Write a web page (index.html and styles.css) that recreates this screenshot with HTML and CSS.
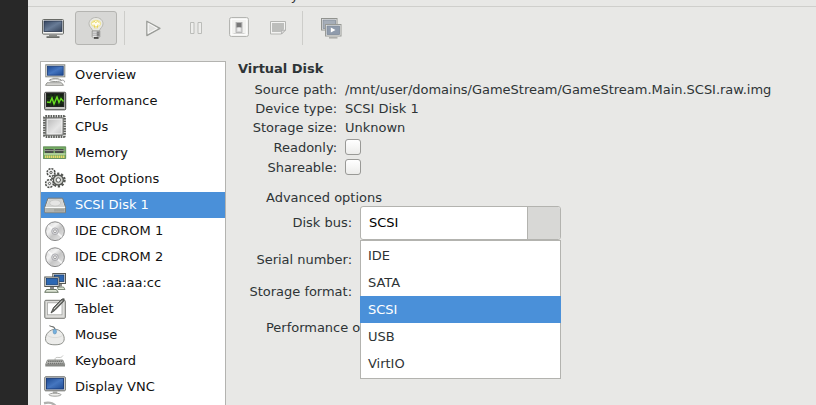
FILE: index.html
```html
<!DOCTYPE html>
<html lang="en">
<head>
  <meta charset="UTF-8">
  <title>Virtual Machine - SCSI Disk 1</title>
  <link rel="stylesheet" href="styles.css">
</head>
<body>
  <svg class="defs" width="0" height="0">
    <defs>
      <linearGradient id="screen" x1="0" y1="0" x2="1" y2="1">
        <stop offset="0" stop-color="#1d4890"/><stop offset=".5" stop-color="#4576c0"/><stop offset="1" stop-color="#1f4b93"/>
      </linearGradient>
      <linearGradient id="slate" x1="0" y1="0" x2="1" y2="1">
        <stop offset="0" stop-color="#354560"/><stop offset=".5" stop-color="#687b96"/><stop offset="1" stop-color="#344258"/>
      </linearGradient>
      <linearGradient id="metal" x1="0" y1="0" x2="1" y2="1">
        <stop offset="0" stop-color="#b4b4b4"/><stop offset=".6" stop-color="#e6e6e6"/><stop offset="1" stop-color="#c4c4c4"/>
      </linearGradient>
      <linearGradient id="disc" x1="0" y1="0" x2="1" y2="1">
        <stop offset="0" stop-color="#d0d0d0"/><stop offset=".35" stop-color="#f3f3f3"/><stop offset=".55" stop-color="#c6c6c6"/><stop offset="1" stop-color="#ececec"/>
      </linearGradient>
      <symbol id="cd" viewBox="0 0 24 24">
        <circle cx="12" cy="13.2" r="9.4" fill="url(#disc)" stroke="#8b8b8b"/>
        <path d="M12 13 5 7.500M12 13l7 6" stroke="#fff" stroke-width="2" opacity=".7"/>
        <circle cx="12" cy="13.2" r="3.3" fill="#d8d8dc" stroke="#a2a2a6" stroke-width=".8"/>
        <circle cx="12" cy="13.2" r="1.4" fill="#fff" stroke="#808080" stroke-width=".7"/>
      </symbol>
    </defs>
  </svg>

  <div class="window">
    <div class="menubar"><span>Send Key</span></div>

    <div class="toolbar">
      <button class="tool">
        <svg width="24" height="24" viewBox="0 0 24 24">
          <rect x="1.500" y="3.500" width="21" height="14.600" rx="1" fill="#f4f4f2" stroke="#676965"/>
          <rect x="3" y="5" width="18" height="10.500" fill="url(#slate)" stroke="#28354b" stroke-width=".8"/>
          <path d="M8 18.600h8v1.600H8z" fill="#8b8d89"/><path d="M5.500 20.300h13v1.600h-13z" fill="#5c5e5a"/>
        </svg>
      </button>
      <button class="tool active">
        <svg width="24" height="24" viewBox="0 0 24 24">
          <path d="M12 1.500c-4 0-7 2.800-7 6.300 0 3.400 3 4 3.600 7.200h6.800C16 11.800 19 11.200 19 7.800c0-3.500-3-6.300-7-6.300z" fill="#e9e9e4" stroke="#b2b2ad" stroke-width=".9"/>
          <ellipse cx="12" cy="7.500" rx="4.600" ry="3.200" fill="#fffdf0" stroke="#eee49a" stroke-width="1.200"/>
          <path d="M8.500 7l1.500-1.800 1.800 1.500 1.800-1.500L15.500 7M10 8.500l1 4M14 8.500l-1 4" fill="none" stroke="#e6cf40" stroke-width=".8"/>
          <path d="M8.200 15h7.600v5.600l-1.600 1.700H9.800l-1.600-1.700z" fill="#e4e4e4" stroke="#8b8b88" stroke-width=".8"/>
          <path d="M12.700 15.500h2.700v5h-2.700z" fill="#777"/><path d="M8.500 17.200h7M8.500 19.200h7" stroke="#999" stroke-width=".8"/>
          <path d="M10 21h4.500v1.800H10z" fill="#4b4b48"/>
        </svg>
      </button>
      <i class="sep"></i>
      <button class="tool">
        <svg width="24" height="24" viewBox="0 0 24 24">
          <path d="M5.800 5.200v14.400L19 12.400z" fill="#e2e2e0" stroke="#999b97" stroke-width="1.200" stroke-linejoin="round"/>
          <path d="M7.300 7.400v9.800l8.800-4.800z" fill="none" stroke="#f8f8f7"/>
        </svg>
      </button>
      <button class="tool">
        <svg width="24" height="24" viewBox="0 0 24 24">
          <path d="M6.500 6.500h3.500v11H6.500zM14 6.500h3.500v11H14z" fill="#eeeeec" stroke="#bbbcb9"/>
        </svg>
      </button>
      <button class="tool">
        <svg width="24" height="24" viewBox="0 0 24 24">
          <rect x="2.500" y="1.500" width="19" height="19" rx="2" fill="#f2f2f0" stroke="#b4b5b2"/>
          <rect x="4.500" y="3.500" width="15" height="15" fill="none" stroke="#fff" stroke-width=".7"/>
          <path d="M6.500 17.500h11" stroke="#d5d5d3"/>
          <rect x="9" y="6.500" width="6" height="10" fill="#d5d5d5" stroke="#aaa" stroke-width=".8"/>
          <path d="M9.500 7h5v4.500h-5z" fill="#777"/><path d="M10.500 11.500h3v3.500h-3z" fill="#eee"/>
        </svg>
      </button>
      <button class="tool narrow">
        <svg width="24" height="24" viewBox="0 0 24 24">
          <path d="M4.500 5.500h15v8.500l-4 4h-11z" fill="#f3f3f2" stroke="#b4b5b2"/>
          <path d="M6 7h12v6.500L14.500 16H6z" fill="#bdbebc"/>
          <path d="M15.500 18c-.2-1.500 0-3 0-3.700 1.300.3 3 .2 4-.3z" fill="#dededc" stroke="#aaa" stroke-width=".8"/>
        </svg>
      </button>
      <i class="sep"></i>
      <button class="tool">
        <svg width="24" height="24" viewBox="0 0 24 24">
          <rect x="2.500" y="2.500" width="15.500" height="11.500" fill="#f0f0ef" stroke="#91938f"/>
          <rect x="4" y="4" width="12.500" height="8.500" fill="#a5adb8" stroke="#858e9b" stroke-width=".8"/>
          <rect x="6.500" y="8.500" width="15.500" height="11.500" fill="#f0f0ef" stroke="#989a96"/>
          <rect x="8" y="10" width="12.500" height="8.500" fill="#8f9bac" stroke="#7d899a" stroke-width=".8"/>
          <path d="M11.800 11.500v5l4.700-2.500z" fill="#fff"/>
          <path d="M10 21.800h8.500" stroke="#a9aaa7" stroke-width="1.500"/>
        </svg>
      </button>
    </div>

    <div class="content">
      <ul class="hardware">
        <li>
          <svg width="24" height="24" viewBox="0 0 24 24">
            <rect x="2.800" y="2.800" width="19" height="12" fill="#e9e9e6" stroke="#84867f"/>
            <rect x="4.400" y="4.200" width="15.800" height="9" fill="url(#screen)" stroke="#173a78" stroke-width=".8"/>
            <path d="M9.500 15.300h6v2.200h-6z" fill="#c9cac6"/>
            <ellipse cx="12.300" cy="18.200" rx="6" ry="1.300" fill="#fff" stroke="#777973" stroke-width=".8"/>
            <path d="M4 20.800h14.500l2 2.500H2.500z" fill="#e4e4e1" stroke="#777973" stroke-width=".8"/>
            <path d="M18 18.500c2-1 4 0 3.500 1.800" fill="none" stroke="#999"/>
          </svg>
          Overview
        </li>
        <li>
          <svg width="24" height="24" viewBox="0 0 24 24">
            <rect x="1.700" y="4.300" width="21" height="17.500" rx="1" fill="#c7c8c4" stroke="#3b3d39"/>
            <rect x="3.500" y="5.500" width="17.300" height="13" fill="#142112" stroke="#222"/>
            <path d="M4 9h16.500M4 12h16.500M4 15h16.500M8 6v12M12 6v12M16 6v12" stroke="#2a4923" stroke-width=".6"/>
            <path d="M4 14l3 .5 2-4.500 2 6 3-7 2 5.500 2-4 2.500 3" fill="none" stroke="#68df20" stroke-width="1.400"/>
          </svg>
          Performance
        </li>
        <li>
          <svg width="24" height="24" viewBox="0 0 24 24">
            <rect x="1.500" y="2.500" width="20" height="20" rx="1" fill="none" stroke="#5f615d" stroke-width="2.800" stroke-dasharray="1.700 .8"/>
            <rect x="2.800" y="3.800" width="17.400" height="17.400" rx="1" fill="url(#metal)" stroke="#6a6c68"/>
            <rect x="4.500" y="5.500" width="14" height="14" fill="none" stroke="#f0f0f0" stroke-width=".7"/>
          </svg>
          CPUs
        </li>
        <li>
          <svg width="24" height="24" viewBox="0 0 24 24">
            <path d="M.3 6.800h22.400v11.700H.3z" fill="#75ad65" stroke="#55824a" stroke-width=".8"/>
            <path d="M2 9h8.500v4H2zM12 9h8.500v4H12z" fill="#484d49"/>
            <path d="M1 10.500h21" stroke="#93958e" stroke-width="1"/>
            <path d="M1 14h21.500" stroke="#e3edcb" stroke-width="1"/>
            <path d="M2 16.700h19.500" stroke="#e8d76a" stroke-width="2.500" stroke-dasharray="1.400 .6"/>
          </svg>
          Memory
        </li>
        <li>
          <svg width="24" height="24" viewBox="0 0 24 24">
            <circle cx="15.300" cy="14" r="6.200" fill="none" stroke="#555753" stroke-width="2.400" stroke-dasharray="2.200 1.700"/>
            <circle cx="15.300" cy="14" r="5" fill="#d2d3cf" stroke="#555753" stroke-width="1.300"/>
            <circle cx="15.300" cy="14" r="2.200" fill="#fff" stroke="#555753"/>
            <circle cx="8" cy="6.500" r="3.900" fill="#eee" stroke="#4a4c48" stroke-width="1.500" stroke-dasharray="2 1.060"/>
            <circle cx="8" cy="6.500" r="1.100" fill="#fff" stroke="#555753"/>
            <circle cx="6.500" cy="17.500" r="3.900" fill="#eee" stroke="#4a4c48" stroke-width="1.500" stroke-dasharray="2 1.060"/>
            <circle cx="6.500" cy="17.500" r="1.100" fill="#fff" stroke="#555753"/>
          </svg>
          Boot Options
        </li>
        <li class="selected">
          <svg width="24" height="24" viewBox="0 0 24 24">
            <path d="M5 6.200h14.500l3 9v5.500H1.800v-5.500z" fill="#e9e9e8" stroke="#777975" stroke-linejoin="round"/>
            <path d="M5.800 7h13l2.500 8H3z" fill="#d2d3d1"/><ellipse cx="12.200" cy="11" rx="5.500" ry="3" fill="#e5e5e4" stroke="#c2c3c0" stroke-width=".7"/>
            <path d="M2.300 15.800h19.800v4.400H2.300z" fill="#b3b5b0"/><path d="M12 17v2.500M14 17v2.500M16 17v2.500M18 17v2.500M20 17v2.500" stroke="#888a85" stroke-width=".8"/>
            <path d="M2.300 15.500h19.800" stroke="#fff" stroke-width=".8"/>
          </svg>
          SCSI Disk 1
        </li>
        <li><svg width="24" height="24"><use href="#cd"/></svg>IDE CDROM 1</li>
        <li><svg width="24" height="24"><use href="#cd"/></svg>IDE CDROM 2</li>
        <li>
          <svg width="24" height="24" viewBox="0 0 24 24">
            <rect x="9.800" y="3.500" width="12.700" height="10" fill="#e7e7e4" stroke="#555753"/>
            <rect x="11.400" y="5" width="9.500" height="6.500" fill="#2c68b4" stroke="#143c72" stroke-width=".8"/>
            <path d="M16 14h3v2.500h-3z" fill="#888"/><path d="M14.500 17h6l1.500 2.500h-7z" fill="#dde5d5" stroke="#62705d" stroke-width=".8"/>
            <rect x="1.800" y="7" width="14.200" height="9.500" fill="#eeeeeb" stroke="#555753"/>
            <rect x="3.400" y="8.500" width="11" height="6.300" fill="#2c68b4" stroke="#143c72" stroke-width=".8"/>
            <path d="M7 17h4v2H7z" fill="#888"/><path d="M3.500 19.500h9.800l2 2.800H1.700z" fill="#dde5d5" stroke="#596853" stroke-width=".9"/>
          </svg>
          NIC :aa:aa:cc
        </li>
        <li>
          <svg width="24" height="24" viewBox="0 0 24 24">
            <rect x="1.800" y="4.300" width="20.500" height="18" rx="1" fill="#ddddda" stroke="#737571"/>
            <rect x="4.500" y="6.800" width="14.500" height="12" fill="#fff" stroke="#a4a5a2" stroke-width=".8"/>
            <path d="M8 17l2.500-5.500L19 3l2.200-.2-.6 2.700-8.800 9z" fill="#6c6e6a" stroke="#444642" stroke-width=".8"/>
            <path d="M11 13l8-8.300" stroke="#d5d6d3"/>
          </svg>
          Tablet
        </li>
        <li>
          <svg width="24" height="24" viewBox="0 0 24 24">
            <path d="M6.500 3.500c1 2 5-.5 5.500 4" fill="none" stroke="#6d6f6b" stroke-width="1.200"/>
            <path d="M12 7.300c-5 0-9.500 4.500-9.500 9.300 0 4.500 3.500 6.200 9.500 6.200s9.200-1.700 9.200-6.200C21.200 11.800 17 7.300 12 7.300z" fill="#ececea" stroke="#8c8e89"/>
            <path d="M4.500 13.500c4 2.800 11 2.800 15 0" fill="none" stroke="#d5d6d3" stroke-width=".8"/>
            <ellipse cx="11.800" cy="9.500" rx="1.700" ry="2.500" fill="#75b1df" stroke="#5a8db5" stroke-width=".6"/>
          </svg>
          Mouse
        </li>
        <li>
          <svg width="24" height="24" viewBox="0 0 24 24">
            <path d="M12 12c0-2.500 1-2.800 4-2.500 2 .2 3-.5 4-2" fill="none" stroke="#c5c6c3"/>
            <path d="M4.500 12h15.200l2 4.500H2.600z" fill="#c6c7c4" stroke="#777975" stroke-width=".8"/>
            <path d="M5 13.300h14.500M4.500 15.300h16" stroke="#585a56" stroke-width="1.100" stroke-dasharray="1.600 .5"/>
            <path d="M2.300 16.700h19.700v1.800H2.300z" fill="#858783"/>
          </svg>
          Keyboard
        </li>
        <li>
          <svg width="24" height="24" viewBox="0 0 24 24">
            <rect x="1.800" y="2.800" width="20.500" height="14" rx=".8" fill="#e0e0dd" stroke="#676965"/>
            <rect x="3.500" y="4.300" width="17" height="10.700" fill="url(#screen)" stroke="#153775" stroke-width=".9"/>
            <path d="M9.800 17.300h4.500v2.200H9.800z" fill="#aaaba8"/>
            <ellipse cx="12" cy="20.700" rx="6" ry="1.500" fill="#f0f0ee" stroke="#8a8c88" stroke-width=".8"/>
          </svg>
          Display VNC
        </li>
        <li>
          <svg width="24" height="24" viewBox="0 0 24 24">
            <path d="M1 3.200c6-1.500 11 .5 13 5" fill="none" stroke="#b0b1ae" stroke-width="2.500"/>
          </svg>
        </li>
      </ul>

      <div class="details">
        <h1>Virtual Disk</h1>
        <div class="info">
          <span>Source path:</span><span>/mnt/user/domains/GameStream/GameStream.Main.SCSI.raw.img</span>
          <span>Device type:</span><span>SCSI Disk 1</span>
          <span>Storage size:</span><span>Unknown</span>
          <label for="readonly">Readonly:</label><input id="readonly" type="checkbox">
          <label for="shareable">Shareable:</label><input id="shareable" type="checkbox">
        </div>
        <p class="expander">Advanced options</p>
        <div class="advanced">
          <label>Disk bus:</label>
          <div class="combo">
            <span class="value">SCSI</span><span class="arrow"></span>
            <ul class="dropdown">
              <li>IDE</li>
              <li>SATA</li>
              <li class="selected">SCSI</li>
              <li>USB</li>
              <li>VirtIO</li>
            </ul>
          </div>
          <label>Serial number:</label><span></span>
          <label>Storage format:</label><span></span>
        </div>
        <p class="expander">Performance options</p>
      </div>
    </div>
  </div>
</body>
</html>
```
FILE: styles.css
```css
* {
  box-sizing: border-box;
}
body {
  margin: 0;
  padding-left: 28px;
  height: 405px;
  overflow: hidden;
  background: #282828;
  font-family: "DejaVu Sans", sans-serif;
  font-size: 13px;
  color: #2e3436;
}
ul, p, h1 {
  margin: 0;
  padding: 0;
  list-style: none;
}
.defs {
  display: block;
}
.window {
  height: 405px;
  overflow: hidden;
  background: #e8e8e6;
}
.menubar {
  display: flex;
  align-items: flex-end;
  height: 7px;
  padding: 0 0 2px 210px;
  border-bottom: 1px solid #cfcfcc;
  overflow: hidden;
  line-height: 17px;
}

/* toolbar */
.toolbar {
  display: flex;
  padding: 4px 4px 0;
  height: 54px;
}
.tool {
  display: flex;
  align-items: center;
  justify-content: center;
  width: 42px;
  height: 34px;
  margin-right: 1px;
  padding: 0;
  border: 1px solid transparent;
  border-radius: 3px;
  background: none;
}
.tool.active {
  border-color: #b4b4b1;
  background: #d7d7d5;
}
.tool.narrow {
  width: 34px;
}
.sep {
  width: 1px;
  height: 34px;
  margin: 0 7px 0 6px;
  background: #cdcdca;
}

.content {
  display: flex;
  padding-left: 12px;
}

/* hardware list */
.hardware {
  width: 186px;
  height: 360px;
  border: 1px solid #b3b3b0;
  background: #fff;
  color: #111;
}
.hardware li {
  display: flex;
  align-items: center;
  gap: 8px;
  height: 26px;
  padding: 0 0 2px 2px;
}
.hardware .selected {
  background: #4a90d9;
  color: #fff;
}
.hardware svg {
  flex: none;
}

/* device details */
.details {
  padding-left: 12px;
  letter-spacing: -0.02px;
}
h1 {
  font-size: 13px;
  line-height: 16px;
}
.info {
  display: grid;
  grid-template-columns: 99px auto;
  grid-template-rows: 19px 19px 19px 20px 20px;
  column-gap: 8px;
  align-items: center;
  margin-top: 3px;
}
.info > :nth-child(odd) {
  text-align: right;
}
input {
  appearance: none;
  width: 16px;
  height: 16px;
  margin: 0;
  border: 1px solid #999996;
  border-radius: 3px;
  background: linear-gradient(#fff, #ececea);
}
.expander {
  padding-left: 28px;
  line-height: 16px;
}
.info + .expander {
  margin-top: 13px;
}
.advanced {
  display: grid;
  grid-template-columns: 114px 201px;
  grid-template-rows: 34px 38px 26px;
  column-gap: 8px;
  align-items: center;
}
.advanced label {
  text-align: right;
}
.advanced label:first-child {
  padding-bottom: 2px;
}
.advanced + .expander {
  margin-top: 16px;
}
.combo {
  position: relative;
  display: flex;
  height: 34px;
  border: 1px solid #b3b3af;
  border-radius: 3px;
  background: #fff;
  color: #000;
}
.value {
  flex: 1;
  padding-left: 8px;
  line-height: 32px;
}
.arrow {
  width: 33px;
  border-left: 1px solid #b3b3af;
  border-radius: 0 2px 2px 0;
  background: #d8d8d6;
}
.dropdown {
  position: absolute;
  top: 33px;
  left: -1px;
  width: 201px;
  padding: 1px 0;
  border: 1px solid #b3b3af;
  background: #fff;
  color: #2e3436;
}
.dropdown li {
  padding-left: 7px;
  line-height: 27px;
}
.dropdown .selected {
  margin: 0 -1px;
  padding-left: 8px;
  background: #4a90d9;
  color: #fff;
}
```
